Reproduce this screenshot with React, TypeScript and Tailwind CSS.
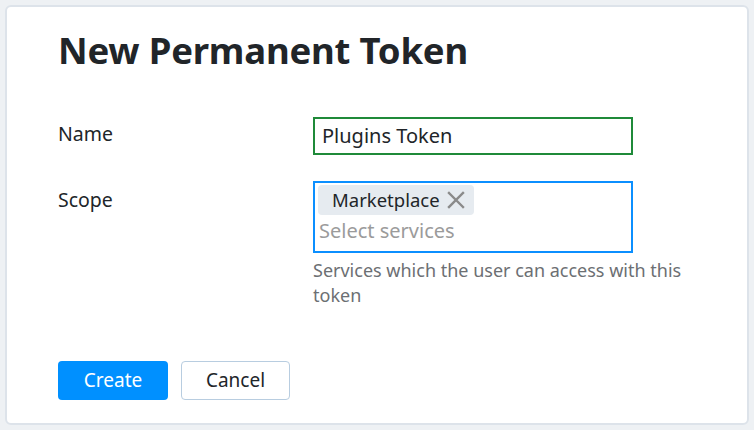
import React from "react";

export default function App() {
  return (
    <div
      className="w-[754px] h-[430px] bg-[#eef1f4] p-[5px]"
      style={{ fontFamily: '"Noto Sans", "Open Sans", sans-serif' }}
    >
      <div className="h-full bg-white border-2 border-[#dde3ea] rounded-[6px] pl-[51px] pr-[20px]">
        <h1 className="text-[36.5px] leading-[44px] font-bold text-[#212529] pt-[21px] tracking-[-0.2px]">
          New Permanent Token
        </h1>
        <div className="mt-[45px] flex flex-col">
          <div className="flex items-start">
            <div className="w-[255px] text-[19.5px] leading-[24px] text-[#212529] pt-[5px]">Name</div>
            <div className="w-[320px] h-[38px] border-2 border-[#1f8a39] flex items-center px-[7px] text-[20px] text-[#212529]">
              Plugins Token
            </div>
          </div>
          <div className="flex items-start mt-[26px]">
            <div className="w-[255px] text-[19.5px] leading-[24px] text-[#212529] pt-[7px]">Scope</div>
            <div className="flex flex-col w-[320px]">
              <div className="h-[72px] border-2 border-[#0b8fff] px-[3px] pt-[2px] flex flex-col">
                <div className="self-start flex items-center gap-[7px] bg-[#e6ebf0] rounded-[4px] h-[30px] pl-[14px] pr-[9px] text-[18.5px] text-[#212529]">
                  <span>Marketplace</span>
                  <svg width="18" height="18" viewBox="0 0 18 18" fill="none">
                    <path d="M2 2L16 16M16 2L2 16" stroke="#8a8a8a" strokeWidth="2.4" strokeLinecap="square" />
                  </svg>
                </div>
                <div className="text-[20px] leading-[30px] text-[#9b9b9b] pl-[1px] mt-[1px]">Select services</div>
              </div>
              <div className="w-[400px] text-[18px] leading-[25px] text-[#6c6f73] mt-[5px]">
                Services which the user can access with this token
              </div>
            </div>
          </div>
        </div>
        <div className="flex gap-[13px] mt-[53px]">
          <button className="w-[110px] h-[39px] bg-[#0090ff] text-white rounded-[4px] text-[19px]">
            Create
          </button>
          <button className="w-[109px] h-[39px] bg-white border border-[#b8cde0] text-[#212529] rounded-[4px] text-[19px]">
            Cancel
          </button>
        </div>
      </div>
    </div>
  );
}
